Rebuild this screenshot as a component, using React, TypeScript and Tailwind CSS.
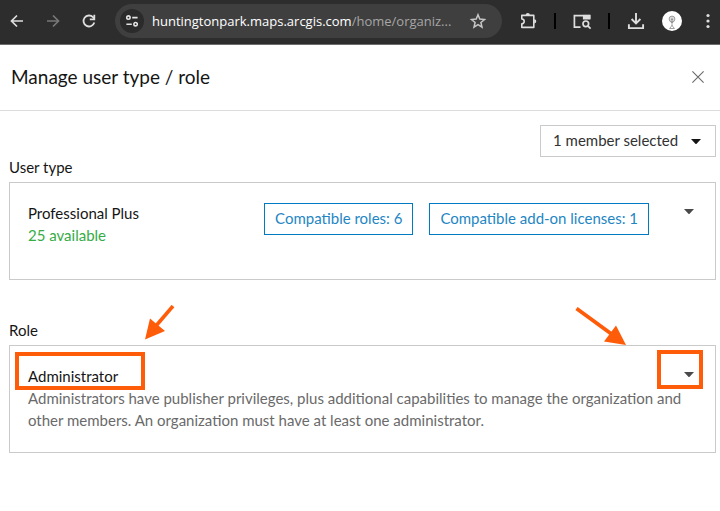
const ToolbarButton = ({ label, children, color = "text-[#dedede]" }) => (
  <button type="button" aria-label={label} className={`flex items-center justify-center flex-none size-5 ${color}`}>
    {children}
  </button>
)

const Divider = () => <div className="flex-none w-0.5 h-4 bg-black" />

const Caret = ({ className = "" }) => (
  <svg viewBox="0 0 10 5" className={`flex-none w-2.5 h-[5px] ${className}`} fill="currentColor" aria-hidden="true">
    <path d="M0 0h10L5.6 4.7a.8.8 0 0 1-1.2 0z" />
  </svg>
)

const BrowserBar = () => (
  <header className="flex items-center gap-4 pt-1 pb-1.5 pl-[7px] pr-0.5 bg-[#2d2d2d] border-b border-[#6e6e6e]">
    <ToolbarButton label="Back">
      <svg viewBox="0 0 20 20" className="size-5" fill="none" stroke="currentColor" strokeWidth="1.7">
        <path d="M16 10H5M10 4.5 4.5 10l5.5 5.5" />
      </svg>
    </ToolbarButton>
    <ToolbarButton label="Forward" color="text-[#777777]">
      <svg viewBox="0 0 20 20" className="size-5" fill="none" stroke="currentColor" strokeWidth="1.7">
        <path d="M4 10h11M10 4.5l5.5 5.5-5.5 5.5" />
      </svg>
    </ToolbarButton>
    <ToolbarButton label="Reload">
      <svg viewBox="0 0 20 20" className="size-5" fill="none" stroke="currentColor" strokeWidth="1.8">
        <path d="M15.3 11.5A5.5 5.5 0 1 1 14 6.2l1.3 1.4" />
        <path d="M15.3 3.8v4.5h-4.5" />
      </svg>
    </ToolbarButton>

    <div className="flex items-center flex-1 min-w-0 h-[34px] pl-[5px] pr-3.5 rounded-full bg-[#3f3f3f]">
      <button
        type="button"
        aria-label="View site information"
        className="flex items-center justify-center flex-none size-6 mr-2 rounded-full bg-[#2b2b2b] text-[#e3e3e3]"
      >
        <svg viewBox="0 0 12 12" className="size-3" fill="none" stroke="currentColor" strokeWidth="1.6">
          <circle cx="2.4" cy="2.6" r="1.7" />
          <path d="M6.2 2.6h5.4M.4 9.2h5.4" />
          <circle cx="9.6" cy="9.2" r="1.7" />
        </svg>
      </button>
      <div className="flex-1 min-w-0 text-[13px] whitespace-nowrap font-['Open_Sans',sans-serif] text-[#a6a6a6]">
        <span className="text-white">huntingtonpark.maps.arcgis.com</span>/home/organiz...
      </div>
      <button type="button" aria-label="Bookmark this tab" className="flex-none size-5 text-[#c7c7c7]">
        <svg viewBox="0 0 20 20" className="size-5" fill="none" stroke="currentColor" strokeWidth="1.5">
          <path d="m10 3.8 1.8 4.3 4.7.4-3.6 3 1.1 4.6-4-2.4-4 2.4 1.1-4.6-3.6-3 4.7-.4z" />
        </svg>
      </button>
    </div>

    <ToolbarButton label="Extensions">
      <svg viewBox="0 0 20 20" className="size-5" fill="none" stroke="currentColor" strokeWidth="1.6">
        <path d="M3.8 4.4h12v12h-12v-3.6a2.4 2.4 0 0 0 0-4.8z" strokeLinejoin="round" />
        <path d="M7.700 4a2.100 2.100 0 0 1 4.200 0zM16.200 8.200a2.100 2.100 0 0 1 0 4.200z" fill="currentColor" stroke="none" />
      </svg>
    </ToolbarButton>
    <Divider />
    <ToolbarButton label="Search this page">
      <svg viewBox="0 0 20 20" className="size-5" fill="none" stroke="currentColor" strokeWidth="1.7">
        <path d="M8.5 16.2H2.400V4.700h15.200v3.400" />
        <path d="M10.900 3.900h7.500v4.600h-7.500z" fill="currentColor" stroke="none" />
        <circle cx="13.800" cy="12.800" r="2.800" />
        <path d="m15.800 14.800 2.800 2.800" />
      </svg>
    </ToolbarButton>
    <Divider />
    <ToolbarButton label="Downloads">
      <svg viewBox="0 0 20 20" className="size-5" fill="none" stroke="currentColor" strokeWidth="1.9">
        <path d="M10 2v10M5.6 8l4.4 4.4L14.4 8M2.9 13.2v3.9h14.2v-3.9" />
      </svg>
    </ToolbarButton>
    <ToolbarButton label="Profile">
      <svg viewBox="0 0 20 20" className="size-5" fill="none" stroke="#8a8a8a" strokeWidth=".8">
        <circle cx="10" cy="10" r="10" fill="#fff" stroke="none" />
        <circle cx="10" cy="8" r="2.9" fill="#dcdcdc" />
        <path d="M10 7v8M8.8 11.5h2.4M10 14.5l-2.400 3M10 14.5l2.400 3M9 8.500h2M7.600 17.500h4.800" />
      </svg>
    </ToolbarButton>
    <ToolbarButton label="Menu">
      <svg viewBox="0 0 20 20" className="size-5" fill="currentColor">
        <circle cx="10" cy="4.5" r="1.6" />
        <circle cx="10" cy="10" r="1.6" />
        <circle cx="10" cy="15.5" r="1.6" />
      </svg>
    </ToolbarButton>
  </header>
)

const CompatibleButton = ({ children }) => (
  <button type="button" className="h-8 px-2.5 pb-0.5 border border-[#007ac2] text-[#1f86c4] whitespace-nowrap">
    {children}
  </button>
)

const App = () => (
  <div className="text-[15px] leading-[22px] bg-white font-[Lato,sans-serif] text-[#151515]">
    <BrowserBar />

    <div className="flex items-center justify-between h-[66px] pl-[11px] pr-3 pb-0.5 border-b border-[#dcdcdc]">
      <h1 className="text-[19px]">Manage user type / role</h1>
      <button type="button" aria-label="Close" className="flex items-center justify-center size-5 text-[#6a6a6a]">
        <svg viewBox="0 0 12 12" className="size-3" fill="none" stroke="currentColor" strokeWidth="1.1">
          <path d="m.4.4 11.2 11.2M11.6.4.4 11.6" />
        </svg>
      </button>
    </div>

    <main className="pt-3.5 pl-[9px] pr-1">
      <div className="flex justify-end">
        <div className="relative w-44">
          <select
            aria-label="Selected members"
            className="block w-full h-8 pb-0.5 pl-3 pr-8 border appearance-none bg-white border-[#cacaca] text-[#323232]"
          >
            <option>1 member selected</option>
          </select>
          <Caret className="absolute right-[15px] top-3.5 pointer-events-none text-[#151515]" />
        </div>
      </div>

      <section>
        <h2 className="mb-[5px] leading-5">User type</h2>
        <div className="flex items-start h-[98px] pt-[19px] pl-[18px] pr-5 border border-[#cacaca]">
          <div className="flex-1">
            <h3>Professional Plus</h3>
            <p className="text-[#35ac46]">25 available</p>
          </div>
          <div className="flex gap-4 mt-px mr-[34px]">
            <CompatibleButton>Compatible roles: 6</CompatibleButton>
            <CompatibleButton>Compatible add-on licenses: 1</CompatibleButton>
          </div>
          <button type="button" aria-label="Change user type" className="flex items-center justify-center w-3 h-[18px] text-[#4a4a4a]">
            <Caret />
          </button>
        </div>
      </section>

      <section className="mt-10">
        <h2 className="mb-[5px] leading-5">Role</h2>
        <div className="relative flex items-start pt-[19px] pb-[21px] pl-[18px] pr-5 border border-[#cacaca]">
          <div className="flex-1">
            <h3>Administrator</h3>
            <p className="text-[#6a6a6a]">
              Administrators have publisher privileges, plus additional capabilities to manage the organization and other
              members. An organization must have at least one administrator.
            </p>
          </div>
          <button type="button" aria-label="Change role" className="flex items-center justify-center w-3 h-[18px] text-[#4a4a4a]">
            <Caret />
          </button>

          {/* callouts */}
          <div className="absolute left-[5px] top-1.5 w-[130px] h-[38px] border-4 border-[#ff5c0a]" />
          <div className="absolute right-3 top-1 w-[46px] h-[39px] border-4 border-[#ff5c0a]" />
          <svg viewBox="0 0 30 36" className="absolute left-[135px] -top-[41px] w-[30px] h-9 text-[#ff5c0a]" fill="currentColor">
            <path d="M0 34.5 5 13.5 20 26z" />
            <path d="m28 1-18 21" stroke="currentColor" strokeWidth="3.6" />
          </svg>
          <svg viewBox="0 0 51 38" className="absolute right-[89px] -top-[39px] w-[51px] h-[38px] text-[#ff5c0a]" fill="currentColor">
            <path d="M51 38 29 34.5 41 18.5z" />
            <path d="m1.5 1.5 35 25.5" stroke="currentColor" strokeWidth="3.8" />
          </svg>
        </div>
      </section>
    </main>
  </div>
)

export default App
